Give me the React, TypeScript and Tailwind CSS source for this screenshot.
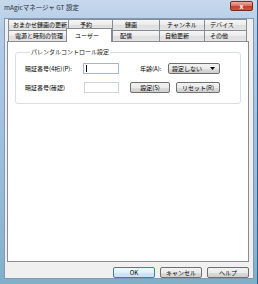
import React from 'react';

const row1 = [
    { name: 'おまかせ録画の更新', w: 'w-[60px]', pad: 'pl-[4px]' },
    { name: '予約', w: 'w-[44px]', pad: 'pl-[11px]' },
    { name: '録画', w: 'w-[47px]', pad: 'pl-[12px]' },
    { name: 'チャンネル', w: 'w-[45px]', pad: 'pl-[7px]' },
    { name: 'デバイス', w: 'w-[43px]', pad: 'pl-[5px]' },
];

const row2 = [
    { name: '電源と時刻の管理', w: 'w-[58px]', pad: 'pl-[6px]' },
    { name: 'ユーザー', w: 'w-[46px]', pad: 'pl-[8px]', active: true },
    { name: '配信', w: 'w-[47px]', pad: 'pl-[7px]' },
    { name: '自動更新', w: 'w-[45px]', pad: 'pl-[5px]' },
    { name: 'その他', w: 'w-[43px]', pad: 'pl-[5px]' },
];

function Tab({ name, w, pad, active, last }: { name: string; w: string; pad: string; active?: boolean; last?: boolean }) {
    if (active) {
        return (
            <div className={`${w} ${pad} relative z-10 -mb-[1px] h-[14px] flex items-center border-t border-l border-r border-[#898c95] bg-white`}>
                <span className="whitespace-nowrap">{name}</span>
            </div>
        );
    }
    return (
        <div className={`${w} ${pad} h-[11px] flex items-center border-t border-l border-[#898c95] bg-[linear-gradient(180deg,#f6f6f6_0%,#ebebeb_50%,#dedede_51%,#e4e4e4_100%)] ${last ? 'border-r' : ''}`}>
            <span className="whitespace-nowrap">{name}</span>
        </div>
    );
}

function Btn({ label, w, primary }: { label: string; w: string; primary?: boolean }) {
    return (
        <div
            className={`${w} h-[11px] flex items-center justify-center rounded-[2px] border whitespace-nowrap ${
                primary
                    ? 'border-[#3c7fb1] bg-[linear-gradient(180deg,#f2f8fc_0%,#e3f0f9_50%,#d2e7f6_51%,#c7e1f4_100%)]'
                    : 'border-[#707070] bg-[linear-gradient(180deg,#f2f2f2_0%,#ebebeb_50%,#dddddd_51%,#cfcfcf_100%)]'
            }`}
        >
            {label}
        </div>
    );
}

export default function App() {
    return (
        <div className="w-[258px] h-[284px] flex flex-col pl-[4px] pr-[3px] pb-[5px] border-r border-[#2f5f93] bg-[linear-gradient(180deg,#c6d8ec_0%,#b4cde7_10%,#9fbfe0_50%,#8fb6d6_80%,#7fb0c8_100%)] font-['Noto_Sans_CJK_JP',sans-serif] text-[6px] leading-[8px] text-black">
            {/* Title bar */}
            <div className="h-[18px] flex items-start justify-between">
                <span className="mt-[3px] text-[6.5px] leading-[9px] text-[#1e2a36] whitespace-nowrap">mAgicマネージャ GT 設定</span>
                <div className="mt-[1px] mr-[1px] w-[23px] h-[10px] rounded-[2px] border border-[#7a2a20] bg-[linear-gradient(180deg,#eab0a4_0%,#d8725f_45%,#c2412c_55%,#d0583f_100%)] flex items-center justify-center text-white text-[7px] leading-none font-bold">
                    x
                </div>
            </div>

            {/* Client area */}
            <div className="flex-1 flex flex-col bg-[#f0f0f0] border border-[#8399b3]">
                <div className="ml-[3px] flex flex-col">
                    <div className="flex">
                        {row1.map((t, i) => (
                            <Tab key={t.name} {...t} last={i === row1.length - 1} />
                        ))}
                    </div>
                    <div className="flex items-end h-[11px]">
                        {row2.map((t, i) => (
                            <Tab key={t.name} {...t} last={i === row2.length - 1} />
                        ))}
                    </div>
                </div>

                {/* Tab panel */}
                <div className="ml-[2px] mr-[4px] h-[221px] border border-[#898c95] bg-white flex flex-col">
                    <fieldset className="mt-[6px] mx-[7px] pl-[9px] pb-[10px] border border-[#d5dfe5] rounded-[3px]">
                        <legend className="ml-[5px] px-[1px] leading-[8px] text-[#1a1a1a]">パレンタルコントロール設定</legend>
                        <div className="mt-[7px] h-[11px] flex items-center">
                            <span className="w-[58px] whitespace-nowrap">暗証番号(4桁)(P):</span>
                            <div className="w-[36px] h-[11px] border border-[#a4b6cc] bg-white flex items-center">
                                <div className="ml-[2px] w-[1px] h-[7px] bg-black" />
                            </div>
                            <span className="ml-[21px] w-[28px] whitespace-nowrap">年齢(A):</span>
                            <div className="w-[52px] h-[11px] rounded-[2px] border border-[#707070] bg-[linear-gradient(180deg,#f2f2f2_0%,#ebebeb_50%,#dddddd_51%,#cfcfcf_100%)] flex items-center justify-between pl-[3px] pr-[4px]">
                                <span className="whitespace-nowrap">設定しない</span>
                                <svg width="5" height="3" viewBox="0 0 5 3">
                                    <polygon points="0,0 5,0 2.5,3" fill="#000" />
                                </svg>
                            </div>
                        </div>
                        <div className="mt-[8px] h-[11px] flex items-center">
                            <span className="w-[59px] whitespace-nowrap">暗証番号(確認)</span>
                            <div className="w-[35px] h-[11px] border border-[#cfd3d8] bg-white" />
                            <div className="ml-[11px]">
                                <Btn label="設定(S)" w="w-[40px]" />
                            </div>
                            <div className="ml-[6px]">
                                <Btn label="リセット(R)" w="w-[44px]" />
                            </div>
                        </div>
                    </fieldset>
                </div>

                {/* Dialog buttons */}
                <div className="mt-[5px] mr-[4px] flex justify-end gap-[5px]">
                    <Btn label="OK" w="w-[42px]" primary />
                    <Btn label="キャンセル" w="w-[42px]" />
                    <Btn label="ヘルプ" w="w-[42px]" />
                </div>
            </div>
        </div>
    );
}
